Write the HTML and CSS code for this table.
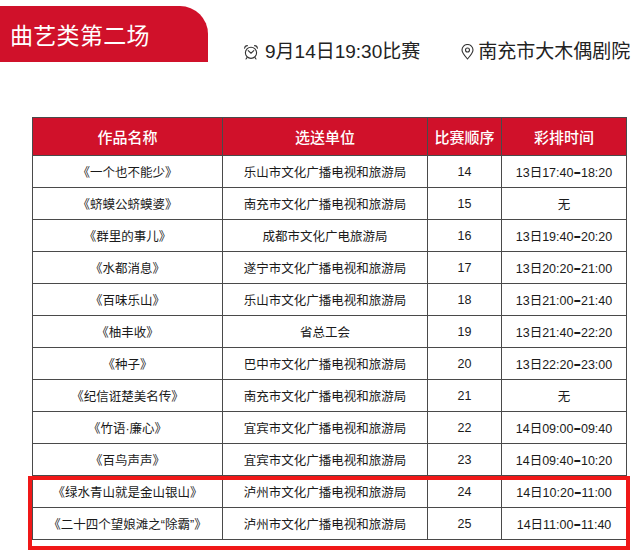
FILE: index.html
```html
<!DOCTYPE html>
<html lang="zh">
<head>
<meta charset="utf-8">
<link rel="stylesheet" href="styles.css">
</head>
<body>
<div class="top">
  <div class="banner">曲艺类第二场</div>
  <div class="info">
    <span class="item">
      <svg class="ico" width="16" height="16" viewBox="0 0 16 16" fill="none" stroke="#333" stroke-width="1.1" stroke-linecap="round">
        <circle cx="8" cy="8.8" r="5.6"/>
        <path d="M5.2 6.6 L8 9.2 L10.8 6.6"/>
        <path d="M1.6 4.2 A3 3 0 0 1 4.4 1.6"/>
        <path d="M14.4 4.2 A3 3 0 0 0 11.6 1.6"/>
        <path d="M4 13.6 L3 15 M12 13.6 L13 15"/>
      </svg>9月14日19:30比赛</span>
    <span class="item loc">
      <svg class="ico" width="13" height="16" viewBox="0 0 13 16" fill="none" stroke="#333" stroke-width="1.1">
        <path d="M6.5 15 C3 11 1 8.5 1 6 A5.5 5.5 0 0 1 12 6 C12 8.5 10 11 6.5 15 Z"/>
        <circle cx="6.5" cy="6" r="2"/>
      </svg>南充市大木偶剧院</span>
  </div>
</div>
<div class="wrap">
<table class="sched">
  <colgroup><col class="c1"><col class="c2"><col class="c3"><col class="c4"></colgroup>
  <thead>
    <tr><th>作品名称</th><th>选送单位</th><th>比赛顺序</th><th>彩排时间</th></tr>
  </thead>
  <tbody>
    <tr><td>《一个也不能少》</td><td>乐山市文化广播电视和旅游局</td><td>14</td><td>13日17:40<b>–</b>18:20</td></tr>
    <tr><td>《蛴蟆公蛴蟆婆》</td><td>南充市文化广播电视和旅游局</td><td>15</td><td>无</td></tr>
    <tr><td>《群里的事儿》</td><td>成都市文化广电旅游局</td><td>16</td><td>13日19:40<b>–</b>20:20</td></tr>
    <tr><td>《水都消息》</td><td>遂宁市文化广播电视和旅游局</td><td>17</td><td>13日20:20<b>–</b>21:00</td></tr>
    <tr><td>《百味乐山》</td><td>乐山市文化广播电视和旅游局</td><td>18</td><td>13日21:00<b>–</b>21:40</td></tr>
    <tr><td>《柚丰收》</td><td>省总工会</td><td>19</td><td>13日21:40<b>–</b>22:20</td></tr>
    <tr><td>《种子》</td><td>巴中市文化广播电视和旅游局</td><td>20</td><td>13日22:20<b>–</b>23:00</td></tr>
    <tr><td>《纪信诳楚美名传》</td><td>南充市文化广播电视和旅游局</td><td>21</td><td>无</td></tr>
    <tr><td>《竹语·廉心》</td><td>宜宾市文化广播电视和旅游局</td><td>22</td><td>14日09:00<b>–</b>09:40</td></tr>
    <tr><td>《百鸟声声》</td><td>宜宾市文化广播电视和旅游局</td><td>23</td><td>14日09:40<b>–</b>10:20</td></tr>
    <tr><td>《绿水青山就是金山银山》</td><td>泸州市文化广播电视和旅游局</td><td>24</td><td>14日10:20<b>–</b>11:00</td></tr>
    <tr><td>《二十四个望娘滩之“除霸”》</td><td>泸州市文化广播电视和旅游局</td><td>25</td><td>14日11:00<b>–</b>11:40</td></tr>
  </tbody>
</table>
<div class="mark"></div>
</div>
</body>
</html>
```
FILE: styles.css
```css
html, body {
  margin: 0;
  padding: 0;
  background: #fff;
}
body {
  font-family: "Liberation Sans", "Noto Sans CJK SC", sans-serif;
  color: #222;
  width: 640px;
  height: 555px;
  overflow: hidden;
}
.top {
  display: flex;
  align-items: flex-start;
  padding-top: 6px;
}
.banner {
  width: 198px;
  height: 56px;
  padding-left: 10px;
  background: #d0112a;
  border-top-right-radius: 28px;
  color: #fff;
  font-size: 23px;
  line-height: 56px;
  font-family: "Noto Sans CJK SC", sans-serif;
  letter-spacing: 0.3px;
}
.info {
  display: flex;
  align-items: center;
  padding-top: 34px;
  padding-left: 35px;
  font-size: 19px;
  line-height: 24px;
  color: #222;
}
.item {
  display: flex;
  align-items: center;
}
.ico {
  margin-right: 6px;
}
.loc {
  margin-left: 41px;
}
.loc .ico {
  margin-right: 4px;
}
.wrap {
  position: relative;
  margin: 53px 0 0 32px;
  width: 595px;
}
.sched {
  border-collapse: collapse;
  width: 595px;
  table-layout: fixed;
  font-size: 12.5px;
}
.c1 { width: 190px; }
.c2 { width: 205px; }
.c3 { width: 74px; }
.c4 { width: 125px; }
.sched th, .sched td {
  border: 1px solid #4a4a4a;
  text-align: center;
  padding: 0;
  white-space: nowrap;
}
.sched th {
  background: #d0112a;
  color: #fff;
  height: 37px;
  font-size: 15px;
  font-weight: 500;
  font-family: "Noto Sans CJK SC", sans-serif;
}
.sched td {
  height: 31px;
  color: #1a1a1a;
}
.sched td b {
  font-family: "DejaVu Sans", sans-serif;
  font-size: 15px;
  line-height: 0;
  font-weight: bold;
}
.mark {
  position: absolute;
  left: -4px;
  top: 359px;
  width: 594px;
  height: 66px;
  border: 4px solid #f01818;
}
```
